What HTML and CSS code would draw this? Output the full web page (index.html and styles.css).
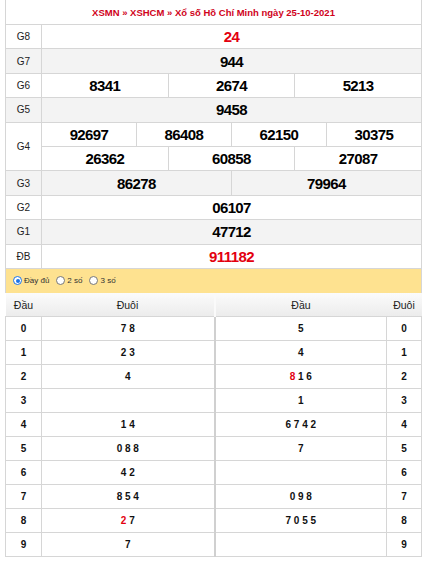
FILE: index.html
```html
<!DOCTYPE html>
<html lang="vi">
<head>
<meta charset="utf-8">
<link rel="stylesheet" href="styles.css">
</head>
<body>
<table class="kq">
  <colgroup>
    <col class="c-lbl">
    <col span="12" class="c-num">
  </colgroup>
  <tr class="title"><td colspan="13">XSMN » XSHCM » Xổ số Hồ Chí Minh ngày 25-10-2021</td></tr>
  <tr><td class="lbl">G8</td><td colspan="12" class="num red">24</td></tr>
  <tr class="alt"><td class="lbl">G7</td><td colspan="12" class="num">944</td></tr>
  <tr><td class="lbl">G6</td><td colspan="4" class="num">8341</td><td colspan="4" class="num">2674</td><td colspan="4" class="num">5213</td></tr>
  <tr class="alt"><td class="lbl">G5</td><td colspan="12" class="num">9458</td></tr>
  <tr><td class="lbl" rowspan="2">G4</td><td colspan="3" class="num">92697</td><td colspan="3" class="num">86408</td><td colspan="3" class="num">62150</td><td colspan="3" class="num">30375</td></tr>
  <tr><td colspan="4" class="num">26362</td><td colspan="4" class="num">60858</td><td colspan="4" class="num">27087</td></tr>
  <tr class="alt"><td class="lbl">G3</td><td colspan="6" class="num">86278</td><td colspan="6" class="num">79964</td></tr>
  <tr><td class="lbl">G2</td><td colspan="12" class="num">06107</td></tr>
  <tr class="alt"><td class="lbl">G1</td><td colspan="12" class="num">47712</td></tr>
  <tr><td class="lbl">ĐB</td><td colspan="12" class="num red">911182</td></tr>
  <tr class="opts"><td colspan="13">
    <div class="opt-row">
      <span class="opt"><span class="radio on"></span>Đầy đủ</span>
      <span class="opt"><span class="radio"></span>2 số</span>
      <span class="opt"><span class="radio"></span>3 số</span>
    </div>
  </td></tr>
</table>
<table class="loto">
  <colgroup>
    <col class="l1"><col class="l2"><col class="l3"><col class="l4">
  </colgroup>
  <tr class="head"><th>Đầu</th><th class="mid">Đuôi</th><th>Đầu</th><th>Đuôi</th></tr>
  <tr><td>0</td><td class="mid">7 8</td><td>5</td><td>0</td></tr>
  <tr><td>1</td><td class="mid">2 3</td><td>4</td><td>1</td></tr>
  <tr><td>2</td><td class="mid">4</td><td><span class="red">8</span> 1 6</td><td>2</td></tr>
  <tr><td>3</td><td class="mid"></td><td>1</td><td>3</td></tr>
  <tr><td>4</td><td class="mid">1 4</td><td>6 7 4 2</td><td>4</td></tr>
  <tr><td>5</td><td class="mid">0 8 8</td><td>7</td><td>5</td></tr>
  <tr><td>6</td><td class="mid">4 2</td><td></td><td>6</td></tr>
  <tr><td>7</td><td class="mid">8 5 4</td><td>0 9 8</td><td>7</td></tr>
  <tr><td>8</td><td class="mid"><span class="red">2</span> 7</td><td>7 0 5 5</td><td>8</td></tr>
  <tr><td>9</td><td class="mid">7</td><td></td><td>9</td></tr>
</table>
</body>
</html>
```
FILE: styles.css
```css
html, body {
  margin: 0;
  padding: 0;
  background: #fff;
}
body {
  padding: 0 4px 0 5px;
  font-family: "Liberation Sans", Arial, sans-serif;
  color: #000;
}
table {
  border-collapse: collapse;
  table-layout: fixed;
  width: 417px;
}
td, th {
  border: 1px solid #d6d6d6;
  padding: 0;
  text-align: center;
  vertical-align: middle;
}
.c-lbl { width: 36px; }
.kq tr { height: 24.4px; }
.kq .title td {
  border-top: none;
  height: 24px;
  color: #d0021b;
  font-size: 9.5px;
  font-weight: bold;
}
.kq .alt td { background: #f3f3f3; }
.lbl {
  font-size: 10px;
  color: #222;
}
.num {
  font-size: 15px;
  font-weight: bold;
  letter-spacing: -0.6px;
}
.red { color: #e3000f; }
.kq .opts td {
  background: #fee290;
  height: 21px;
  text-align: left;
  border-bottom: none;
}
.opt-row {
  display: flex;
  align-items: center;
  gap: 7px;
  padding-left: 7px;
}
.opt {
  display: inline-flex;
  align-items: center;
  gap: 2px;
  font-size: 8px;
  color: #333;
}
.radio {
  width: 7px;
  height: 7px;
  border: 1px solid #777;
  border-radius: 50%;
  background: #fff;
  box-sizing: content-box;
  position: relative;
}
.radio.on {
  border-color: #1a73e8;
}
.radio.on::after {
  content: "";
  position: absolute;
  left: 1.5px;
  top: 1.5px;
  width: 4px;
  height: 4px;
  border-radius: 50%;
  background: #1a73e8;
}
.l1 { width: 36px; }
.l2 { width: 173px; }
.l3 { width: 172px; }
.l4 { width: 35px; }
.loto tr { height: 24px; }
.loto .head th {
  height: 20px;
  font-size: 10.5px;
  font-weight: normal;
  color: #222;
  background: linear-gradient(#fbfbfb, #ececec);
  border-left: none;
  border-right: none;
  border-top: none;
}
.loto .head th.mid { border-right: 2px solid #fafafa; }
.loto td {
  font-size: 10px;
  font-weight: bold;
  color: #111;
}
.loto td.mid { border-right: 2px solid #d0d0d0; }
```
